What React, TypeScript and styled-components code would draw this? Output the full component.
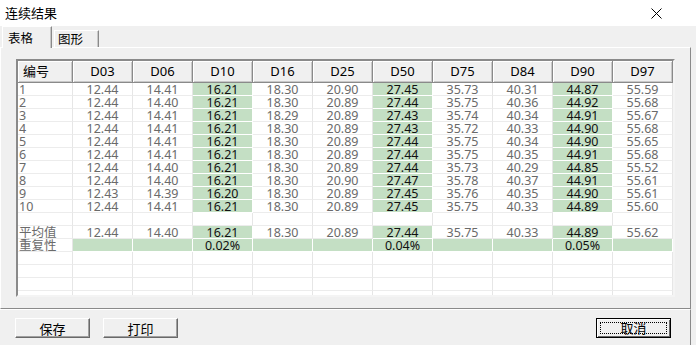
import React from "react";
import styled, { createGlobalStyle } from "styled-components";

const GlobalStyle = createGlobalStyle`
  html, body {
    margin: 0;
    padding: 0;
    background: #f0f0f0;
  }
  body {
    font-family: "Noto Sans", "Noto Sans CJK SC", sans-serif;
    font-size: 12px;
    color: #000;
  }
`;

const Window = styled.div`
  width: 696px;
  height: 345px;
  display: flex;
  flex-direction: column;
  background: #f0f0f0;
  overflow: hidden;
`;

const TitleBar = styled.div`
  height: 26px;
  flex: none;
  background: #fff;
  display: flex;
  align-items: center;
  justify-content: space-between;
  padding: 0 34px 0 5px;
  font-size: 13px;
  line-height: 26px;
`;

const TabStrip = styled.div`
  height: 21px;
  flex: none;
  display: flex;
  align-items: flex-end;
  padding-left: 2px;
`;

const Tab = styled.div<{ $active?: boolean }>`
  position: relative;
  z-index: 1;
  box-sizing: border-box;
  width: ${(p) => (p.$active ? 50 : 45)}px;
  height: ${(p) => (p.$active ? 22 : 17)}px;
  margin-bottom: ${(p) => (p.$active ? -1 : 0)}px;
  margin-left: ${(p) => (p.$active ? 0 : 2)}px;
  padding: ${(p) => (p.$active ? "4px 0 0 5px" : "1px 0 0 3px")};
  background: #f0f0f0;
  border-top: 1px solid #fff;
  border-left: 1px solid #fff;
  border-right: 1px solid #8a8a8a;
  box-shadow: inset -1px 0 0 #c8c8c8;
  line-height: 15px;
  font-size: 12.5px;
`;

const TabPanel = styled.div`
  width: 691px;
  height: 262px;
  flex: none;
  box-sizing: border-box;
  border-top: 1px solid #fff;
  border-left: 1px solid #fff;
  border-right: 1px solid #8a8a8a;
  border-bottom: 1px solid #8a8a8a;
  padding: 11px 0 0 15px;
`;

const GridFrame = styled.div`
  width: 659px;
  height: 238px;
  box-sizing: border-box;
  border-style: solid;
  border-width: 2px;
  border-color: #8a8a8a #f4f4f4 #f4f4f4 #8a8a8a;
  box-shadow: inset 1px 1px 0 #696969;
  background: #fff;
  overflow: hidden;
  display: flex;
  flex-direction: column;
`;

const COLS = "55px repeat(10, 60px)";

const HeaderRow = styled.div`
  display: grid;
  grid-template-columns: ${COLS};
  height: 22px;
  flex: none;
`;

const HeaderCell = styled.div<{ $left?: boolean }>`
  box-sizing: border-box;
  background: #f0f0f0;
  border-right: 1px solid #8a8a8a;
  border-bottom: 1px solid #8a8a8a;
  box-shadow: inset 1px 1px 0 #fff, inset -1px -1px 0 #c8c8c8;
  text-align: ${(p) => (p.$left ? "left" : "center")};
  padding-left: ${(p) => (p.$left ? 5 : 0)}px;
  line-height: 21px;
  font-size: 13px;
`;

const Row = styled.div`
  display: grid;
  grid-template-columns: ${COLS};
  height: 13px;
  flex: none;
`;

const Cell = styled.div<{ $green?: boolean; $left?: boolean }>`
  box-sizing: border-box;
  height: 13px;
  border-right: 1px solid ${(p) => (p.$green ? "#fff" : "#e6e6e6")};
  border-bottom: 1px solid ${(p) => (p.$green ? "#fff" : "#ececec")};
  background: ${(p) => (p.$green ? "#c4dfc4" : "#fff")};
  color: ${(p) => (p.$green ? "#111" : "#6a6a6a")};
  text-align: ${(p) => (p.$left ? "left" : "center")};
  padding-left: ${(p) => (p.$left ? 1 : 0)}px;
  font-size: 12.5px;
  line-height: 12px;
  white-space: nowrap;
  overflow: visible;
`;

const CellText = styled.span`
  display: inline-block;
  line-height: 12px;
  transform: translateY(1px);
`;

const Footer = styled.div`
  width: 691px;
  flex: 1;
  box-sizing: border-box;
  border-top: 1px solid #fff;
  border-right: 1px solid #8a8a8a;
  display: flex;
  align-items: flex-start;
  gap: 13px;
  padding: 8px 19px 0 15px;
`;

const Button = styled.div<{ $focused?: boolean }>`
  box-sizing: border-box;
  width: 75px;
  height: 20px;
  display: flex;
  align-items: center;
  justify-content: center;
  background: #f0f0f0;
  border: 1px solid;
  border-color: ${(p) => (p.$focused ? "#000" : "#fff #696969 #696969 #fff")};
  box-shadow: ${(p) =>
    p.$focused
      ? "inset 1px 1px 0 #fff, inset -1px -1px 0 #696969"
      : "inset -1px -1px 0 #a0a0a0"};
  font-size: 13px;
  ${(p) => (p.$focused ? "margin-left: auto;" : "")}
`;

const FocusRing = styled.div`
  box-sizing: border-box;
  width: calc(100% - 6px);
  height: calc(100% - 6px);
  border: 1px dotted #000;
  display: flex;
  align-items: center;
  justify-content: center;
  line-height: 12px;
`;

const CloseGlyph = () => (
  <svg width="11" height="11" viewBox="0 0 11 11">
    <path d="M0.5 0.5 L10.5 10.5 M10.5 0.5 L0.5 10.5" stroke="#000" strokeWidth="1" />
  </svg>
);

const HEAD = ["D03", "D06", "D10", "D16", "D25", "D50", "D75", "D84", "D90", "D97"];
const GREEN = [2, 5, 8];

const DATA: string[][] = [
  ["12.44", "14.41", "16.21", "18.30", "20.90", "27.45", "35.73", "40.31", "44.87", "55.59"],
  ["12.44", "14.40", "16.21", "18.30", "20.89", "27.44", "35.75", "40.36", "44.92", "55.68"],
  ["12.44", "14.41", "16.21", "18.29", "20.89", "27.43", "35.74", "40.34", "44.91", "55.67"],
  ["12.44", "14.41", "16.21", "18.30", "20.89", "27.43", "35.72", "40.33", "44.90", "55.68"],
  ["12.44", "14.41", "16.21", "18.30", "20.89", "27.44", "35.75", "40.34", "44.90", "55.65"],
  ["12.44", "14.41", "16.21", "18.30", "20.89", "27.44", "35.75", "40.35", "44.91", "55.68"],
  ["12.44", "14.40", "16.21", "18.30", "20.89", "27.44", "35.73", "40.29", "44.85", "55.52"],
  ["12.44", "14.40", "16.21", "18.30", "20.90", "27.47", "35.78", "40.37", "44.91", "55.61"],
  ["12.43", "14.39", "16.20", "18.30", "20.89", "27.45", "35.76", "40.35", "44.90", "55.61"],
  ["12.44", "14.41", "16.21", "18.30", "20.89", "27.45", "35.75", "40.33", "44.89", "55.60"],
];

const AVG = ["12.44", "14.40", "16.21", "18.30", "20.89", "27.44", "35.75", "40.33", "44.89", "55.62"];
const REP = ["", "", "0.02%", "", "", "0.04%", "", "", "0.05%", ""];
const EMPTY = Array(10).fill("");

const DataRow: React.FC<{ label?: string; values: string[]; allGreen?: boolean; plain?: boolean }> = ({
  label,
  values,
  allGreen,
  plain,
}) => (
  <Row>
    <Cell $left>{label && <CellText>{label}</CellText>}</Cell>
    {values.map((v, i) => (
      <Cell key={i} $green={!plain && (allGreen || GREEN.includes(i))}>
        {v && <CellText>{v}</CellText>}
      </Cell>
    ))}
  </Row>
);

const App = () => {
  return (
    <>
      <GlobalStyle />
      <Window>
        <TitleBar>
          <span>连续结果</span>
          <CloseGlyph />
        </TitleBar>
        <TabStrip>
          <Tab $active>表格</Tab>
          <Tab>图形</Tab>
        </TabStrip>
        <TabPanel>
          <GridFrame>
            <HeaderRow>
              <HeaderCell $left>编号</HeaderCell>
              {HEAD.map((h) => (
                <HeaderCell key={h}>{h}</HeaderCell>
              ))}
            </HeaderRow>
            {DATA.map((r, i) => (
              <DataRow key={i} label={String(i + 1)} values={r} />
            ))}
            <DataRow values={EMPTY} plain />
            <DataRow label="平均值" values={AVG} />
            <DataRow label="重复性" values={REP} allGreen />
            {[0, 1, 2, 3].map((k) => (
              <DataRow key={k} values={EMPTY} plain />
            ))}
          </GridFrame>
        </TabPanel>
        <Footer>
          <Button>保存</Button>
          <Button>打印</Button>
          <Button $focused>
            <FocusRing>取消</FocusRing>
          </Button>
        </Footer>
      </Window>
    </>
  );
};

export default App;
